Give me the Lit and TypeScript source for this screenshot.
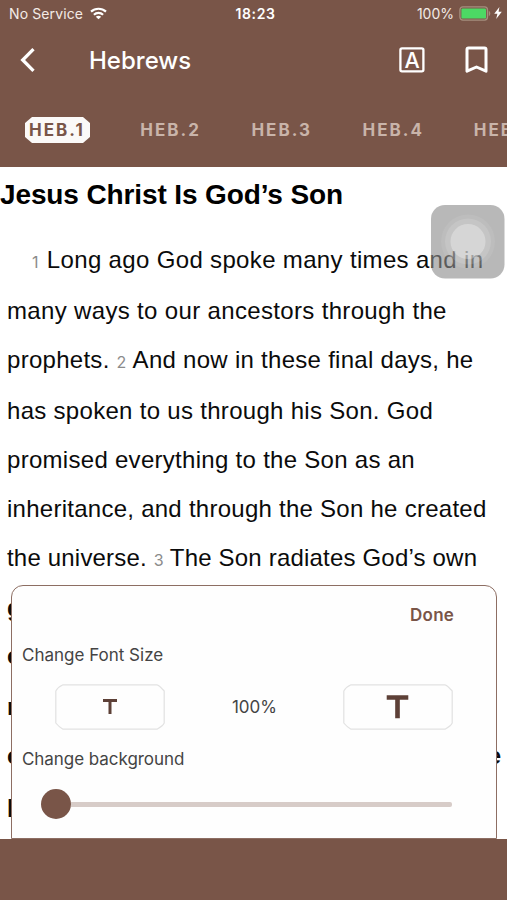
import { LitElement, html, svg, css } from "lit";
import { customElement, state } from "lit/decorators.js";
import { classMap } from "lit/directives/class-map.js";

interface Line {
  height: number;
  spacing: number;
  parts: (string | number)[];
  first?: boolean;
  bold?: boolean;
  wide?: boolean;
}

const LINES: Line[] = [
  { height: 51, spacing: 0.34, parts: [1, "Long ago God spoke many times and in"], first: true },
  { height: 49, spacing: 0.34, parts: ["many ways to our ancestors through the"] },
  { height: 51, spacing: 0.28, parts: ["prophets. ", 2, "And now in these final days, he"] },
  { height: 49, spacing: 0.3, parts: ["has spoken to us through his Son. God"] },
  { height: 49, spacing: 0.29, parts: ["promised everything to the Son as an"] },
  { height: 49, spacing: 0.26, parts: ["inheritance, and through the Son he created"] },
  { height: 50, spacing: 0.19, parts: ["the universe. ", 3, "The Son radiates God’s own"] },
  { height: 48, spacing: 0, parts: ["glory and expresses the very"], bold: true },
  { height: 51, spacing: 0, parts: ["character of God, and he sustains"], bold: true },
  { height: 49, spacing: 0, parts: ["mighty power of his"], bold: true },
  { height: 53, spacing: 0, parts: ["command. When he", "had the"], bold: true, wide: true },
  { height: 34, spacing: 0, parts: ["had cleansed us from our sins"], bold: true },
];

const TABS = ["HEB.1", "HEB.2", "HEB.3", "HEB.4", "HEB.5"];

@customElement("status-bar")
class StatusBar extends LitElement {
  static styles = css`
    :host {
      display: grid;
      grid-template-columns: 1fr auto 1fr;
      align-items: center;
      height: 27px;
      padding: 0 5px 0 9px;
      color: #f3ebe6;
      font: 400 14px "Inter", sans-serif;
    }
    .side { display: flex; align-items: center; }
    .service { letter-spacing: 0.12px; }
    .wifi { margin-left: 7px; margin-top: -1px; }
    .time { font-weight: 600; letter-spacing: 0.6px; color: #fff; }
    .right { justify-content: flex-end; }
    .battery { margin-left: 5px; margin-top: -1px; }
    .bolt { margin-left: 3px; margin-top: -1px; }
  `;
  render() {
    return html`
      <div class="side">
        <span class="service">No Service</span>
        <svg class="wifi" width="17" height="13" viewBox="0 0 17 13" fill="none" stroke="#fff" stroke-width="2.2">
          <path d="M1 4.6C5.2.8 11.8.8 16 4.6" />
          <path d="M3.9 7.7C6.5 5.3 10.5 5.3 13.1 7.7" />
          <path d="M8.5 12.3L5.8 9.7C7.4 8.3 9.6 8.3 11.2 9.7Z" fill="#fff" stroke="none" />
        </svg>
      </div>
      <span class="time">18:23</span>
      <div class="side right">
        <span>100%</span>
        <svg class="battery" width="32" height="15" viewBox="0 0 32 15">
          <rect x=".9" y=".9" width="27.6" height="13.2" rx="3" fill="none" stroke="#a58f7e" stroke-width="1.3" />
          <rect x="2.4" y="2.4" width="24.6" height="10.2" rx="1.2" fill="#4cd964" />
          <path d="M29.8 5v5c2-.6 2-4.4 0-5z" fill="#a58f7e" />
        </svg>
        <svg class="bolt" width="8" height="12" viewBox="0 0 8 12">
          <path d="M5.4 0L.2 6.7H3.4L2.2 12L7.8 4.8H4.6Z" fill="#fff" />
        </svg>
      </div>
    `;
  }
}

@customElement("title-bar")
class TitleBar extends LitElement {
  static styles = css`
    :host {
      display: flex;
      align-items: center;
      height: 66px;
      padding: 0 19px 0 20px;
      color: #fff;
      font: 500 24px "Inter", sans-serif;
    }
    .title { margin-left: 53px; flex: 1; }
    .letter { font: 500 21.5px "Inter", sans-serif; }
    .mark { margin-left: 40px; }
  `;
  render() {
    return html`
      <svg width="16" height="26" viewBox="0 0 16 26" fill="none" stroke="#fff" stroke-width="3.3">
        <path d="M13.5 2.2L2.7 13L13.5 23.8" />
      </svg>
      <span class="title">Hebrews</span>
      <svg width="26" height="26" viewBox="0 0 26 26">
        <rect x="1.4" y="1.4" width="23" height="23" rx="1.6" fill="none" stroke="#fff" stroke-width="2.3" />
        <text class="letter" x="13" y="20.8" text-anchor="middle" fill="#fff">A</text>
      </svg>
      <svg class="mark" width="23" height="28" viewBox="0 0 23 28" fill="none" stroke="#fff" stroke-width="3">
        <path d="M2 25.2V3.5Q2 2 3.5 2H19.5Q21 2 21 3.5V25.2L11.5 21Z" stroke-linejoin="round" />
      </svg>
    `;
  }
}

@customElement("reader-settings")
class ReaderSettings extends LitElement {
  @state() percent = 100;
  static styles = css`
    :host {
      display: flex;
      flex-direction: column;
      box-sizing: border-box;
      height: 254px;
      padding: 17px 43px 0 10px;
      border: 1.5px solid #8d6e63;
      border-bottom-width: 1px;
      border-radius: 12px 12px 0 0;
      background: #fefefe;
      color: #444;
      font: 400 17px/24px "Inter", sans-serif;
    }
    .done { align-self: flex-end; font-weight: 600; color: #795548; letter-spacing: 0.2px; margin-right: -1px; }
    .label { margin-top: 16px; }
    .sizes {
      display: flex;
      align-items: center;
      justify-content: space-between;
      margin: 17px 0 0 33px;
    }
    .percent { padding-left: 1px; }
    .button { display: grid; }
    .button > svg { grid-area: 1 / 1; place-self: center; }
    .background { margin-top: 17px; letter-spacing: -0.05px; }
    .slider { display: flex; align-items: center; margin: 18px 1px 0 19px; }
    .knob { width: 30px; height: 30px; border-radius: 50%; background: #795548; }
    .track { flex: 1; height: 5px; border-radius: 0 2px 2px 0; background: #d7ccc8; }
  `;
  private sizeButton(size: number) {
    return html`<div class="button">
      <svg width="110" height="46" viewBox="0 0 110 46" fill="none" stroke="#e2e2e2" stroke-width="1.2">
        <path d="M8 .8H102Q104 1 109.2 7V39Q108 42 102 45.2H8Q4 43 .8 39V7Q3 3 8 .8Z" />
      </svg>
      <svg width=${size} height=${size} viewBox="0 0 24 24">
        <path fill="#5d4037" d="M5 4v3h5.500v12h3V7H19V4z" />
      </svg>
    </div>`;
  }
  render() {
    return html`
      <span class="done">Done</span>
      <span class="label">Change Font Size</span>
      <div class="sizes">
        ${this.sizeButton(24)}
        <span class="percent">${this.percent}%</span>
        ${this.sizeButton(37)}
      </div>
      <span class="background">Change background</span>
      <div class="slider"><span class="knob"></span><span class="track"></span></div>
    `;
  }
}

@customElement("app-root")
class AppRoot extends LitElement {
  @state() active = 0;
  static styles = css`
    :host {
      display: flex;
      flex-direction: column;
      position: relative;
      height: 900px;
      overflow: hidden;
      background: #fff;
    }
    .top { flex: none; height: 167px; background: #795548; }
    .tabs { display: flex; height: 74px; padding: 24px 0 0 25px; gap: 46.2px; box-sizing: border-box; overflow: hidden; }
    .tab {
      flex: none;
      width: 65px;
      height: 26px;
      box-sizing: border-box;
      padding-left: 4px;
      color: #c9b4aa;
      font: 700 17px/26px "Inter", sans-serif;
      letter-spacing: 2px;
      white-space: nowrap;
    }
    .tab.active {
      background: #fbf9f8;
      color: #795548;
      border-radius: 6px;
      clip-path: polygon(7px 0, 58px 0, 65px 6px, 65px 20px, 58px 26px, 7px 26px, 0 20px, 0 6px);
    }
    .page { flex: 1; min-height: 0; overflow: hidden; color: #0b0b0b; font-family: "Liberation Sans", Arial, sans-serif; }
    h1 { margin: 11px 0 0; font-size: 28px; line-height: 34px; letter-spacing: -0.12px; white-space: nowrap; color: #000; }
    .verses { margin-top: 31px; padding-left: 7px; }
    .line { font-size: 24px; line-height: 34px; white-space: pre; }
    .first { padding-left: 25px; }
    .first .num { margin-right: 8px; }
    .bold { font-weight: 700; }
    .wide { display: flex; justify-content: space-between; width: 494px; }
    .num { font: 400 16px/16px "Inter", sans-serif; color: #8b8b8b; margin-right: 6px; }
    .bottom { flex: none; height: 61px; background: #795548; }
    .panel { position: absolute; left: 11px; right: 10px; top: 585px; }
    .touch { position: absolute; left: 431px; top: 205px; }
  `;
  render() {
    return html`
      <header class="top">
        <status-bar></status-bar>
        <title-bar></title-bar>
        <nav class="tabs">
          ${TABS.map((t, i) => html`<span class=${classMap({ tab: true, active: i === this.active })}>${t}</span>`)}
        </nav>
      </header>
      <main class="page">
        <h1>Jesus Christ Is God’s Son</h1>
        <div class="verses">
          ${LINES.map(
            (l) => html`<div class=${classMap({ line: true, first: !!l.first, bold: !!l.bold, wide: !!l.wide })}
              style="height:${l.height}px;letter-spacing:${l.spacing}px">${l.parts.map((p) =>
                html`<span class=${classMap({ num: typeof p === "number" })}>${p}</span>`
              )}</div>`
          )}
        </div>
      </main>
      <footer class="bottom"></footer>
      <reader-settings class="panel"></reader-settings>
      <svg class="touch" width="74" height="74" viewBox="0 0 74 74">
        <rect width="73.5" height="73.5" rx="14" fill="#8c8c8c" fill-opacity=".62" />
        ${[[27, 0.07], [23, 0.12], [17.5, 0.3]].map(
          ([r, o]) => svg`<circle cx="37" cy="36.5" r=${r} fill="#fff" fill-opacity=${o} />`
        )}
      </svg>
    `;
  }
}
